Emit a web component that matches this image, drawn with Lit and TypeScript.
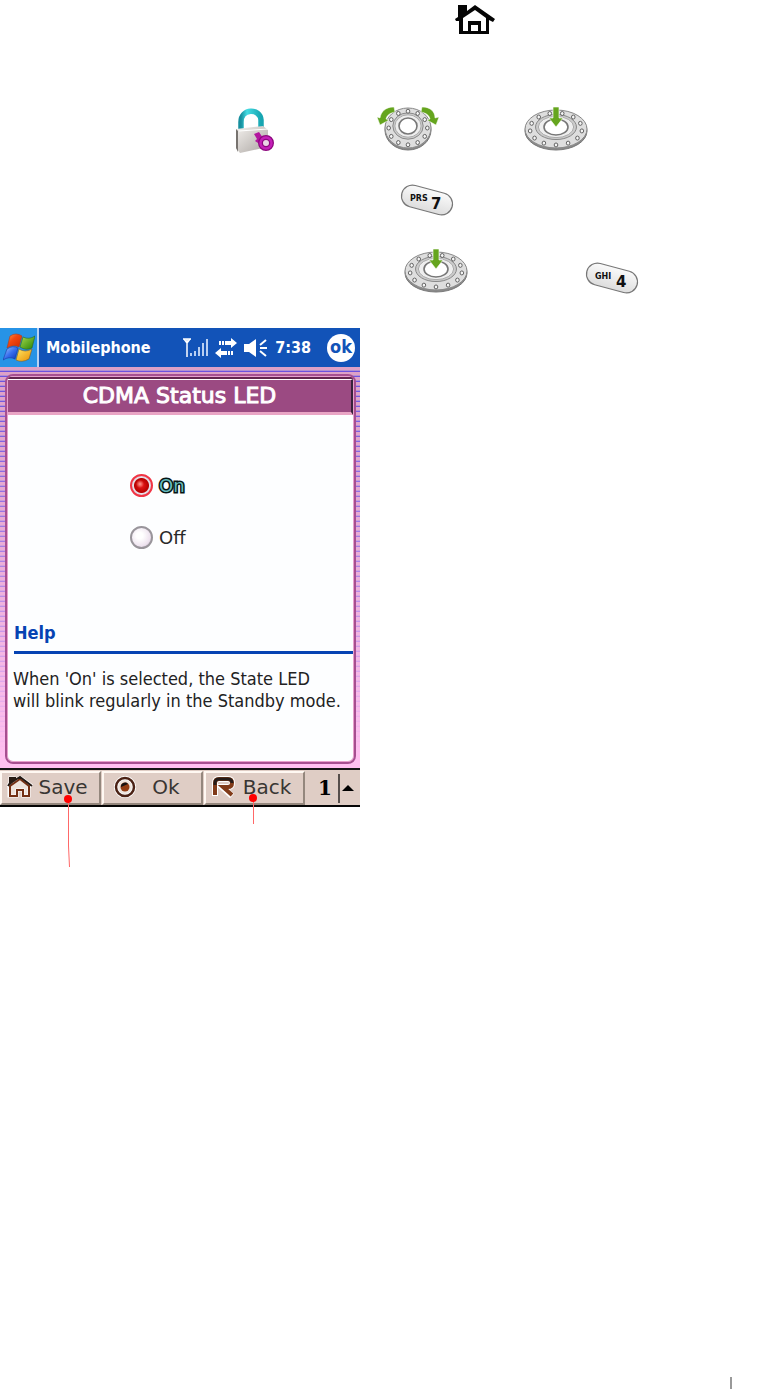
import { LitElement, html, css, svg } from "lit";
import { customElement, property, state } from "lit/decorators.js";

const homeIcon = html`<svg width="40" height="30" viewBox="0 0 40 30" role="img" aria-label="Home key">
  <path d="M3 0H12V6L20 0L40 14L38 17L34 15V29H4V16L1 16L0 14L3 12Z" fill="#050505" />
  <path d="M8 13L20 5L31 13V26H26V16H13V26H8Z" fill="#fff" />
  <path d="M16 20H23V26H16Z" fill="#fff" />
</svg>`;

const lockIcon = html`<svg width="40" height="48" viewBox="0 0 40 48" role="img" aria-label="Lock">
  <defs>
    <linearGradient id="shackle"><stop offset="0" stop-color="#168f9e" /><stop offset=".3" stop-color="#45dce3" /><stop offset="1" stop-color="#17a5b1" /></linearGradient>
    <linearGradient id="lockbody" x2="1" y2="1"><stop offset="0" stop-color="#f4f1ee" /><stop offset="1" stop-color="#aaa5a1" /></linearGradient>
  </defs>
  <path d="M6 24V15C6 1 25 1 26 13V22" fill="none" stroke="url(#shackle)" stroke-width="5.5" />
  <path d="M1 22L28 19L33 23V40L5 46L1 41Z" fill="url(#lockbody)" />
  <path d="M1 22L3 24V45L1 41Z" fill="#77736f" />
  <path d="M4 24L33 22" stroke="#fff" />
  <path d="M19 27L24 25L28 31L23 36L20 34L22 32Z" fill="#b3169f" />
  <circle cx="31" cy="36" r="5.500" fill="#ead5e5" stroke="#8d087e" stroke-width="5" />
  <circle cx="31" cy="36" r="5.500" fill="none" stroke="#c41fb8" stroke-width="2.5" />
</svg>`;

const wheel = (cx: number, cy: number, rx: number, ry: number, hx: number, hy: number, count: number) => svg`
  <ellipse cx=${cx} cy=${cy + 2} rx=${rx} ry=${ry} fill="#8b8b8b" stroke="#777" />
  <ellipse cx=${cx} cy=${cy} rx=${rx} ry=${ry} fill="#dedede" stroke="#888" />
  <ellipse cx=${cx} cy=${cy - 2} rx=${rx * 0.66} ry=${ry * 0.66} fill="#ccc" stroke="#888" />
  <ellipse cx=${cx} cy=${cy - 2} rx=${rx * 0.57} ry=${ry * 0.56} fill="#eee" stroke="#aaa" />
  <ellipse cx=${cx} cy=${cy - 2} rx=${hx} ry=${hy} fill="#fff" stroke="#777" stroke-width="1.6" />
  ${Array.from({ length: count }, (_, i) => {
    const a = Math.PI / 2 + (i * 2 * Math.PI) / count;
    return svg`<ellipse cx=${cx + Math.cos(a) * rx * 0.84} cy=${cy + Math.sin(a) * ry * 0.84} rx="1.8" ry="2" fill="#f5f5f5" stroke="#555" stroke-width=".9" />`;
  })}`;

const rotateIcon = html`<svg width="62" height="44" viewBox="0 0 62 44" role="img" aria-label="Rotate wheel">
  ${wheel(31, 21, 23, 20, 9, 8, 12)}
  <path d="M17 0C8 0 4 5 3 11L0 10L3 18L12 13L9 12C10 8 13 6 18 5Z" fill="#65a51e" stroke="#fff" stroke-width=".5" />
  <path d="M45 0C54 0 58 5 58 11L62 10L59 18L50 13L53 12C52 8 49 6 44 5Z" fill="#65a51e" stroke="#fff" stroke-width=".5" />
</svg>`;

const pressIcon = html`<svg width="64" height="46" viewBox="0 0 64 46" role="img" aria-label="Press wheel">
  ${wheel(32, 22, 31, 19, 12, 8, 13)}
  <path d="M29 0H35V11H39L32 20L25 11H29Z" fill="#65a51e" stroke="#fff" stroke-width=".6" />
</svg>`;

const keyIcon = (letters: string, digit: string) => html`<svg class="key" width="54" height="34" viewBox="0 0 54 34" role="img" aria-label="Key ${digit}">
  <defs><linearGradient id="key" x2="0" y2="1"><stop stop-color="#fafafa" /><stop offset="1" stop-color="#ddd" /></linearGradient></defs>
  <rect x="1" y="6" width="52" height="22" rx="11" transform="rotate(15 27 17)" fill="url(#key)" stroke="#777" stroke-width="1.2" />
  <text x="10" y="18" font-size="8">${letters}</text>
  <text x="31" y="26" font-size="15">${digit}</text>
</svg>`;

const startFlag = html`<svg width="32" height="30" viewBox="0 0 32 30" aria-hidden="true">
  <defs>
    <linearGradient id="fr" x2="1" y2="1"><stop stop-color="#ff9a48" /><stop offset=".4" stop-color="#f34710" /><stop offset="1" stop-color="#cc2900" /></linearGradient>
    <linearGradient id="fg" x2="1" y2="1"><stop stop-color="#a7dd50" /><stop offset="1" stop-color="#268000" /></linearGradient>
    <linearGradient id="fb" x2="1" y2="1"><stop stop-color="#a8cbff" /><stop offset=".5" stop-color="#386fee" /><stop offset="1" stop-color="#0a33b3" /></linearGradient>
    <linearGradient id="fy" x2="1" y2="1"><stop stop-color="#ffe766" /><stop offset="1" stop-color="#e98d00" /></linearGradient>
  </defs>
  <path d="M7 3Q13 -1 19 3L16 14Q10 11 4 15Z" fill="url(#fr)" stroke="#a33c25" stroke-width=".6" />
  <path d="M20 4Q26 7 32 3L29 15Q23 18 17 14Z" fill="url(#fg)" stroke="#266526" stroke-width=".6" />
  <path d="M4 16Q10 12 15 15L12 26Q6 23 0 27Z" fill="url(#fb)" stroke="#1739a2" stroke-width=".6" />
  <path d="M16 16Q22 20 29 16L26 26Q19 30 13 27Z" fill="url(#fy)" stroke="#805d25" stroke-width=".6" />
</svg>`;

const signalIcon = html`<svg width="25" height="20" viewBox="0 0 25 20" role="img" aria-label="Signal">
  <path d="M0 1H8M1 1L4 5L7 1M4 1V19" stroke="#fff" stroke-width="1.5" fill="none" />
  <path d="M8 18V15M12 18V13M16 18V9M20 18V5M24 18V1" stroke="#b9cff2" stroke-width="2" />
</svg>`;
const dataIcon = html`<svg width="22" height="20" viewBox="0 0 22 20" role="img" aria-label="Data connection">
  <path d="M4 3H6V7H4ZM7 3H9V7H7ZM10 3H16V0L22 5L16 10V7H10ZM18 13H16V17H18ZM15 13H13V17H15ZM12 13H6V10L0 15L6 20V17H12Z" fill="#fff" />
</svg>`;
const speakerIcon = html`<svg width="24" height="20" viewBox="0 0 24 20" role="img" aria-label="Volume">
  <path d="M0 6H5L12 1V19L5 14H0Z" fill="#fff" /><path d="M16 7L22 2M16 10H23M16 13L22 18" stroke="#fff" stroke-width="2" />
</svg>`;

const saveIcon = html`<svg width="26" height="22" viewBox="0 0 26 22" aria-hidden="true">
  <path d="M2 20V11L1 9L3 7V2H7V5L13 1L24 9L22 12V20H16V14H10V20Z" fill="#eee3dc" stroke="#fff" stroke-width="3" />
  <path d="M3 20V10L13 3L22 10V20H16V14H10V20Z" fill="none" stroke="#742f13" stroke-width="2" />
  <path d="M1 10L3 7V2H8V4L13 1L25 10" fill="none" stroke="#251812" stroke-width="2" /><path d="M3 2H8V5L3 9Z" fill="#291b13" />
</svg>`;
const targetIcon = html`<svg width="28" height="23" viewBox="-5 0 28 23" aria-hidden="true">
  <circle cx="11" cy="11" r="9" fill="#eee5df" stroke="#fff" stroke-width="4" /><circle cx="11" cy="11" r="9" fill="none" stroke="#4b2114" stroke-width="2.500" />
  <circle cx="11" cy="11" r="4.500" fill="#923c13" /><path d="M7 11A4 4 0 0 1 14 8Z" fill="#171313" />
</svg>`;
const backIcon = html`<svg width="26" height="22" viewBox="-1 0 26 22" aria-hidden="true">
  <path d="M3 20V7Q3 3 7 3H16Q20 3 20 7Q20 11 16 11H10L20 20" fill="none" stroke="#fff" stroke-width="6" />
  <path d="M3 19V7Q3 3 7 3H16Q20 3 20 7Q20 11 16 11H11L20 19" fill="none" stroke="#813b19" stroke-width="4" />
  <path d="M3 9V7Q3 3 7 3H16Q20 3 20 7" fill="none" stroke="#261c19" stroke-width="3" />
</svg>`;

@customElement("soft-key")
class SoftKey extends LitElement {
  @property() label = "";
  @property({ attribute: false }) icon: unknown;
  static styles = css`
    :host { display: block; flex: 1; min-width: 0; }
    button {
      display: flex; align-items: center; width: 100%; height: 100%; box-sizing: border-box;
      padding: 0 6px 2px 5px; border: 2px solid; border-color: #fff8f2 #94877d #94877d #fff8f2;
      background: #dfcdc5; color: #393633; font: 20px "DejaVu Sans", sans-serif;
    }
    span { flex: 1; text-align: center; }
    svg { flex: none; }
  `;
  render() { return html`<button type="button">${this.icon}<span>${this.label}</span></button>`; }
}

@customElement("phone-screen")
class PhoneScreen extends LitElement {
  @state() private led = "On";
  static styles = css`
    :host { display: block; position: relative; width: 360px; max-width: 100%; font-family: "DejaVu Sans Condensed", "DejaVu Sans", sans-serif; }
    .status { display: flex; align-items: center; height: 39px; background: #1253b8; color: #fff; font-size: 16px; font-weight: bold; }
    .start { display: flex; align-items: center; justify-content: center; width: 39px; height: 39px; box-sizing: border-box; padding: 0; border: 0; border-right: 2px solid #b8d2f2; background: #2793e6; }
    .app { flex: 1; padding-left: 7px; }
    .tray { display: flex; align-items: center; gap: 7px; padding-right: 16px; }
    .close { width: 28px; height: 28px; margin-right: 5px; padding: 0 0 2px; border: 0; border-radius: 50%; background: #fff; color: #1253b8; font: bold 18px/24px "DejaVu Sans Condensed", "DejaVu Sans", sans-serif; }
    .desk { padding: 7px 4px 4px 5px; background: linear-gradient(rgba(255, 192, 240, 0) 0%, rgba(255, 192, 240, .45) 50%, #ffc0f0 97%), repeating-linear-gradient(#dda1c6 0 3px, #b08fd2 3px 4px, #6a50df 4px 5px); }
    .panel { border: 2px solid #a64f90; border-radius: 8px; background: #fdfeff; box-shadow: inset 0 0 0 1px #e7a0cc; overflow: hidden; }
    h1 { margin: 3px 1px 0; height: 32px; border: solid; border-width: 1px 2px 3px 0; border-color: #fff #37233c #e9a5c5 #fff; background: #9b4a82; color: #fff; font-family: "DejaVu Sans", sans-serif; font-size: 22px; font-weight: normal; line-height: 32px; text-align: center; -webkit-text-stroke: 1px #fff; box-shadow: 0 -2px #63254f; }
    fieldset { display: grid; gap: 28px; margin: 0; padding: 58px 0 72px 123px; border: 0; }
    .choice { display: flex; align-items: center; gap: 6px; height: 24px; font-family: "DejaVu Sans", sans-serif; font-size: 18px; color: #292929; }
    input { appearance: none; width: 23px; height: 23px; margin: 0; border-radius: 50%; border: 2px solid #99959b; background: radial-gradient(circle at 40% 40%, #fff 20%, #eee3ef 65%, #baabc1); }
    input:checked { border-color: #f13545; background: radial-gradient(circle at 8px 8px, #ff9a90 0, #ed1d1d00 4px), radial-gradient(circle, #ed1d1d 0, #b80000 7px, #e8e0e8 8px, #d8d0dc 10px) border-box; }
    input:checked + span { color: #65bbbc; -webkit-text-stroke: 3px #071515; paint-order: stroke fill; }
    h2 { margin: 0 1px 0 7px; padding-bottom: 6px; border-bottom: 3px solid #0643b3; color: #0643b3; font-size: 18px; line-height: 24px; }
    p { margin: 14px 6px 50px; color: #222; font-size: 18px; line-height: 22px; white-space: nowrap; }
    .softkeys { display: flex; height: 34px; padding: 1px 0 0; border-top: 2px solid #151515; border-bottom: 2px solid #050505; background: #dfcdc5; }
    .keys { display: flex; width: 305px; gap: 1px; }
    .mode { display: flex; align-items: center; gap: 6px; padding-left: 13px; font: bold 20px "DejaVu Serif", serif; }
    .divider { width: 2px; height: 29px; background: #564e4b; }
    .more { padding: 0; border: 0; background: none; margin-left: -4px; line-height: 0; }
    .callouts { position: absolute; left: 0; bottom: -60px; pointer-events: none; }
  `;
  private choice(value: string) {
    return html`<label class="choice"><input type="radio" name="led" .checked=${this.led === value} @change=${() => (this.led = value)} /><span>${value}</span></label>`;
  }
  render() {
    return html`
      <header class="status">
        <button class="start" type="button" aria-label="Start">${startFlag}</button>
        <span class="app">Mobilephone</span>
        <div class="tray">${signalIcon}${dataIcon}${speakerIcon}<span>7:38</span></div>
        <button class="close" type="button">ok</button>
      </header>
      <div class="desk"><div class="panel">
        <h1>CDMA Status LED</h1>
        <fieldset aria-label="CDMA Status LED">${this.choice("On")}${this.choice("Off")}</fieldset>
        <h2>Help</h2>
        <p>When 'On' is selected, the State LED<br />will blink regularly in the Standby mode.</p>
      </div></div>
      <footer class="softkeys">
        <div class="keys">
          <soft-key label="Save" .icon=${saveIcon}></soft-key>
          <soft-key label="Ok" .icon=${targetIcon}></soft-key>
          <soft-key label="Back" .icon=${backIcon}></soft-key>
        </div>
        <div class="mode"><span>1</span><span class="divider"></span>
          <button class="more" type="button" aria-label="More"><svg width="12" height="6" viewBox="0 0 12 6"><path d="M0 6L6 0L12 6Z" /></svg></button>
        </div>
      </footer>
      <svg class="callouts" width="260" height="73" viewBox="0 0 260 73" aria-hidden="true">
        <path d="M68.500 4V52L69.500 73M253.500 4V30" stroke="#ff6868" fill="none" />
        <circle cx="68" cy="5" r="4" fill="#f00" /><circle cx="253" cy="4" r="4" fill="#f00" />
      </svg>`;
  }
}

@customElement("app-root")
class AppRoot extends LitElement {
  static styles = css`
    :host { display: flex; flex-direction: column; min-height: 100vh; background: #fff; }
    .steps { display: grid; grid-template-rows: 107px 76px 66px 79px; }
    .row { display: flex; align-items: flex-start; }
    .home { padding: 5px 0 0 455px; }
    .menu { padding-left: 235px; }
    .rotate { padding-left: 102px; }
    .press { padding-left: 85px; }
    .seven { padding-left: 400px; }
    .four { padding-left: 404px; gap: 117px; }
    .four .key { align-self: flex-start; padding-top: 12px; }
    .key text { font-family: "DejaVu Sans", sans-serif; font-weight: bold; fill: #111; }
    .page-end { display: flex; justify-content: flex-end; margin-top: auto; padding-right: 49px; }
    .mark { width: 2px; height: 12px; background: #999; }
  `;
  render() {
    return html`
      <section class="steps">
        <div class="row home">${homeIcon}</div>
        <div class="row menu">${lockIcon}<span class="rotate">${rotateIcon}</span><span class="press">${pressIcon}</span></div>
        <div class="row seven">${keyIcon("PRS", "7")}</div>
        <div class="row four">${pressIcon}${keyIcon("GHI", "4")}</div>
      </section>
      <phone-screen></phone-screen>
      <footer class="page-end"><span class="mark"></span></footer>`;
  }
}
